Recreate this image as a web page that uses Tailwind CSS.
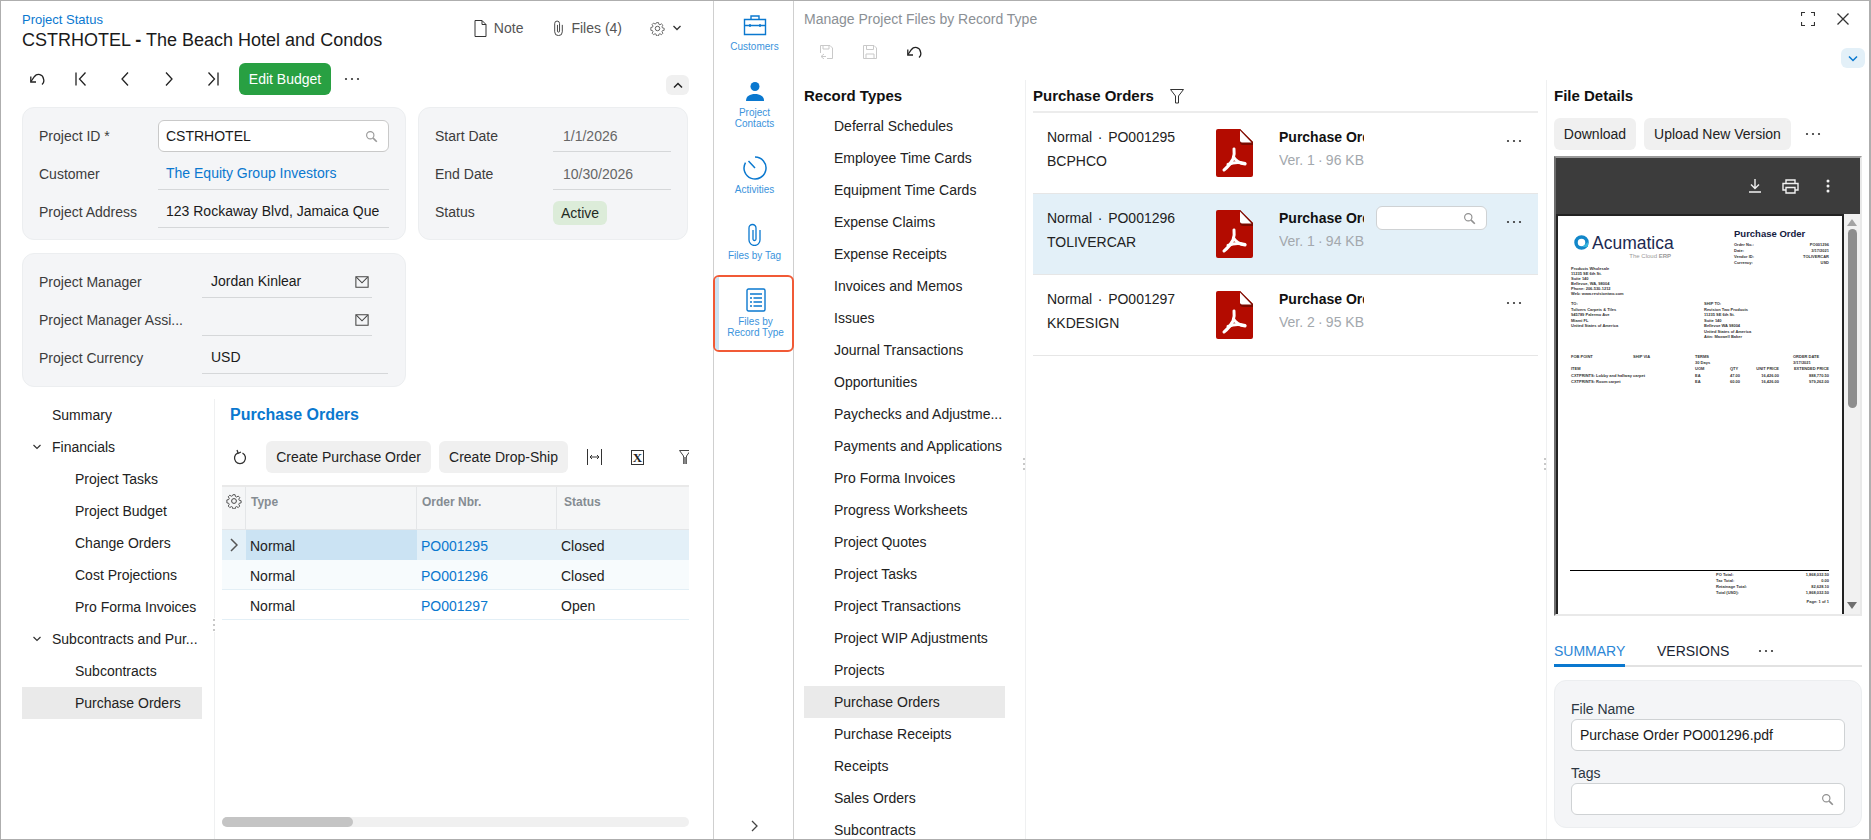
<!DOCTYPE html>
<html lang="en">
<head>
<meta charset="UTF-8">
<title>Project Status</title>
<script src="https://cdn.jsdelivr.net/npm/@tailwindcss/browser@4"></script>
</head>
<body class="bg-white overflow-hidden">
<svg class="hidden">
  <symbol id="pdf" viewBox="0 0 37 48">
    <path d="M2 0H24L37 13V46a2 2 0 0 1-2 2H2a2 2 0 0 1-2-2V2a2 2 0 0 1 2-2z" fill="#b30b00"/>
    <path d="M24 0L37 13V16H27a3 3 0 0 1-3-3z" fill="#7a0a00"/>
    <path d="M24 1.500L35.500 13.500H26a2 2 0 0 1-2-2z" fill="#fff"/>
    <g fill="none" stroke="#fff" stroke-width="3" stroke-linecap="round">
      <path d="M8 41C12 38 15 34 17 30C18 27 18.500 23 18 20"/>
      <path d="M17.500 28C19 31 24 34.500 29 35"/>
      <path d="M12 35.500C17 33.500 23 33 29 34.500"/>
    </g>
  </symbol>
  <symbol id="search" viewBox="0 0 16 16">
    <circle cx="6.500" cy="6.500" r="4.500" fill="none" stroke="currentColor" stroke-width="1.400"/>
    <path d="M10 10l4.500 4.500" stroke="currentColor" stroke-width="2" fill="none"/>
  </symbol>
  <symbol id="more" viewBox="0 0 16 4">
    <circle cx="2" cy="2" r="1.100" fill="currentColor"/><circle cx="8" cy="2" r="1.100" fill="currentColor"/><circle cx="14" cy="2" r="1.100" fill="currentColor"/>
  </symbol>
  <symbol id="gear" viewBox="0 0 16 16">
    <circle cx="8" cy="8" r="2.400" fill="none" stroke="currentColor" stroke-width="1"/>
    <path d="M6.800 1h2.400l.4 2 1.300.6 1.800-1.100 1.700 1.700-1.100 1.800.6 1.300 2 .4v2.400l-2 .4-.6 1.300 1.100 1.800-1.700 1.700-1.800-1.100-1.300.6-.4 2H6.800l-.4-2-1.300-.6-1.800 1.100-1.700-1.700 1.100-1.800-.6-1.300-2-.4V6.800l2-.4.6-1.300-1.100-1.800 1.700-1.700 1.800 1.100 1.300-.6z" transform="translate(.8 .8) scale(.9)" fill="none" stroke="currentColor" stroke-width="1"/>
  </symbol>
  <symbol id="undo" viewBox="0 0 16 13">
    <path d="M2 8.500L5.500 3.500A5 5 0 0 1 14.500 6A5 5 0 0 1 13 11.500" fill="none" stroke="currentColor" stroke-width="1.300"/>
    <path d="M1.800 3.500V9H7" fill="none" stroke="currentColor" stroke-width="1.300"/>
  </symbol>
  <symbol id="mail" viewBox="0 0 16 14">
    <path d="M1 1h14v12H1z" fill="none" stroke="currentColor" stroke-width="1.200"/>
    <path d="M1.500 1.500L8 8l6.500-6.500" fill="none" stroke="currentColor" stroke-width="1.200"/>
  </symbol>
  <symbol id="clip" viewBox="0 0 13 23">
    <path d="M12 7V17a5.500 5.500 0 0 1-11 0V5a3.500 3.500 0 0 1 7 0V16a1.500 1.500 0 0 1-3 0V7" fill="none" stroke="currentColor" stroke-width="1.300"/>
  </symbol>
</svg>

<div class="w-[1871px] h-[840px] flex border-t border-l border-b border-r-2 border-[#aeaeae] font-['Liberation_Sans',Arial,sans-serif] text-[14px] text-[#222] overflow-hidden">

  <!-- left panel: project form -->
  <div class="w-[712px] h-full shrink-0 flex flex-col">
    <div class="h-[62px] flex shrink-0 pl-[21px]">
      <div class="pt-[10px]">
        <div class="text-[13px] leading-[17px] text-[#0a78cf]">Project Status</div>
        <div class="text-[18px] leading-[24px] text-[#1a1a1a] whitespace-nowrap">CSTRHOTEL <b class="font-bold">-</b> The Beach Hotel and Condos</div>
      </div>
      <div class="ml-auto mr-[32px] h-[54px] flex items-center text-[#555]">
        <svg class="w-[13px] h-[17px] mr-[7px] text-[#333]" viewBox="0 0 13 17" fill="none" stroke="currentColor"><path d="M1 .5h7l4 4v12H1zM8 .5v4h4"/></svg>
        <span>Note</span>
        <svg class="w-[9px] h-[16px] ml-[31px] mr-[8px] text-[#333]"><use href="#clip"/></svg>
        <span>Files (4)</span>
        <svg class="w-[15px] h-[15px] ml-[28px] text-[#555]"><use href="#gear"/></svg>
        <svg class="w-[8px] h-[6px] ml-[8px] text-[#333]" viewBox="0 0 8 6" fill="none" stroke="currentColor" stroke-width="1.300"><path d="M.5 1L4 4.500 7.500 1"/></svg>
      </div>
    </div>

    <div class="h-[44px] flex shrink-0 items-start pl-[14px] text-[#222]">
      <div class="w-[44px] h-[32px] flex items-center justify-center"><svg class="w-[16px] h-[13px]"><use href="#undo"/></svg></div>
      <div class="w-[44px] h-[32px] flex items-center justify-center"><svg class="w-[12px] h-[16px]" viewBox="0 0 12 16" fill="none" stroke="currentColor" stroke-width="1.300"><path d="M1 1.500v13M10.500 1.500L4.500 8l6 6.500"/></svg></div>
      <div class="w-[44px] h-[32px] flex items-center justify-center"><svg class="w-[8px] h-[16px]" viewBox="0 0 8 16" fill="none" stroke="currentColor" stroke-width="1.300"><path d="M7 1.500L1 8l6 6.500"/></svg></div>
      <div class="w-[44px] h-[32px] flex items-center justify-center"><svg class="w-[8px] h-[16px]" viewBox="0 0 8 16" fill="none" stroke="currentColor" stroke-width="1.300"><path d="M1 1.500L7 8l-6 6.500"/></svg></div>
      <div class="w-[44px] h-[32px] flex items-center justify-center"><svg class="w-[12px] h-[16px]" viewBox="0 0 12 16" fill="none" stroke="currentColor" stroke-width="1.300"><path d="M11 1.500v13M1.500 1.500L7.500 8l-6 6.500"/></svg></div>
      <div class="ml-[4px] w-[92px] h-[32px] bg-[#28a042] rounded-md text-white flex items-center justify-center">Edit Budget</div>
      <svg class="w-[16px] h-[4px] ml-[13px] mt-[14px] text-[#333]"><use href="#more"/></svg>
      <div class="ml-auto mr-[24px] mt-[12px] w-[23px] h-[20px] bg-[#f0f0f0] rounded-md flex items-center justify-center">
        <svg class="w-[10px] h-[7px]" viewBox="0 0 10 7" fill="none" stroke="#222" stroke-width="1.500"><path d="M1 5.500l4-4 4 4"/></svg>
      </div>
    </div>

    <div class="flex shrink-0 gap-[12px] pl-[21px]">
      <div class="w-[384px] h-[133px] bg-[#f4f5f7] border border-[#eceef0] rounded-xl pl-[16px] pt-[12px] flex flex-col gap-[6px]">
        <div class="flex items-center h-[32px]">
          <span class="w-[119px] text-[#3c3c3c]">Project ID *</span>
          <div class="w-[231px] h-[32px] bg-white border border-[#c9c9c9] rounded-md flex items-center pl-[7px] pr-[10px] text-[#1a1a1a]">CSTRHOTEL<svg class="ml-auto w-[13px] h-[13px] text-[#999]"><use href="#search"/></svg></div>
        </div>
        <div class="flex items-center h-[32px]">
          <span class="w-[119px] text-[#3c3c3c]">Customer</span>
          <div class="w-[231px] h-[32px] border-b border-[#d5d7d9] flex items-center pl-[8px] text-[#0a78cf]">The Equity Group Investors</div>
        </div>
        <div class="flex items-center h-[32px]">
          <span class="w-[119px] text-[#3c3c3c]">Project Address</span>
          <div class="w-[231px] h-[32px] border-b border-[#d5d7d9] flex items-center pl-[8px] whitespace-nowrap text-[#1a1a1a]">123 Rockaway Blvd, Jamaica Que</div>
        </div>
      </div>
      <div class="w-[270px] h-[133px] bg-[#f4f5f7] border border-[#eceef0] rounded-xl pl-[16px] pt-[12px] flex flex-col gap-[6px]">
        <div class="flex items-center h-[32px]">
          <span class="w-[118px] text-[#3c3c3c]">Start Date</span>
          <div class="w-[118px] h-[32px] border-b border-[#d5d7d9] flex items-center pl-[10px] pt-[2px] text-[#666]">1/1/2026</div>
        </div>
        <div class="flex items-center h-[32px]">
          <span class="w-[118px] text-[#3c3c3c]">End Date</span>
          <div class="w-[118px] h-[32px] border-b border-[#d5d7d9] flex items-center pl-[10px] pt-[2px] text-[#666]">10/30/2026</div>
        </div>
        <div class="flex items-center h-[32px]">
          <span class="w-[118px] text-[#3c3c3c]">Status</span>
          <div class="w-[54px] h-[24px] mt-[2px] bg-[#dcecd9] rounded-md flex items-center justify-center text-[#1f2a1f]">Active</div>
        </div>
      </div>
    </div>

    <div class="ml-[21px] mt-[13px] w-[384px] h-[134px] shrink-0 bg-[#f4f5f7] border border-[#eceef0] rounded-xl pl-[16px] pt-[12px] flex flex-col gap-[6px]">
      <div class="flex items-center h-[32px]">
        <span class="w-[163px] text-[#3c3c3c]">Project Manager</span>
        <div class="w-[170px] h-[32px] border-b border-[#d5d7d9] flex items-center pl-[9px] pr-[3px] text-[#1a1a1a]">Jordan Kinlear<svg class="ml-auto w-[14px] h-[14px] text-[#444]"><use href="#mail"/></svg></div>
      </div>
      <div class="flex items-center h-[32px]">
        <span class="w-[163px] text-[#3c3c3c]">Project Manager Assi...</span>
        <div class="w-[170px] h-[32px] border-b border-[#d5d7d9] flex items-center pl-[9px] pr-[3px]"><svg class="ml-auto w-[14px] h-[14px] text-[#444]"><use href="#mail"/></svg></div>
      </div>
      <div class="flex items-center h-[32px]">
        <span class="w-[163px] text-[#3c3c3c]">Project Currency</span>
        <div class="w-[186px] h-[32px] border-b border-[#d5d7d9] flex items-center pl-[9px] text-[#1a1a1a]">USD</div>
      </div>
    </div>

    <div class="flex-1 min-h-0 flex pt-[12px]">
      <div class="relative w-[214px] shrink-0 border-r border-[#eff0f1] pl-[21px]">
        <div class="h-[32px] w-[180px] flex items-center pl-[30px]">Summary</div>
        <div class="h-[32px] w-[180px] flex items-center pl-[11px]"><svg class="w-[8px] h-[6px] mr-[11px]" viewBox="0 0 8 6" fill="none" stroke="#333" stroke-width="1.200"><path d="M.5 1L4 4.500 7.500 1"/></svg>Financials</div>
        <div class="h-[32px] w-[180px] flex items-center pl-[53px]">Project Tasks</div>
        <div class="h-[32px] w-[180px] flex items-center pl-[53px]">Project Budget</div>
        <div class="h-[32px] w-[180px] flex items-center pl-[53px]">Change Orders</div>
        <div class="h-[32px] w-[180px] flex items-center pl-[53px]">Cost Projections</div>
        <div class="h-[32px] w-[180px] flex items-center pl-[53px]">Pro Forma Invoices</div>
        <div class="h-[32px] w-[180px] flex items-center pl-[11px] whitespace-nowrap"><svg class="w-[8px] h-[6px] mr-[11px] shrink-0" viewBox="0 0 8 6" fill="none" stroke="#333" stroke-width="1.200"><path d="M.5 1L4 4.500 7.500 1"/></svg>Subcontracts and Pur...</div>
        <div class="h-[32px] w-[180px] flex items-center pl-[53px]">Subcontracts</div>
        <div class="h-[32px] w-[180px] flex items-center pl-[53px] bg-[#eaeaea]">Purchase Orders</div>
        <div class="absolute right-[-2px] top-[219px] w-[3px] h-[14px] bg-white flex flex-col justify-between py-[1px]">
          <i class="block w-[2px] h-[2px] bg-[#c8c8c8]"></i><i class="block w-[2px] h-[2px] bg-[#c8c8c8]"></i><i class="block w-[2px] h-[2px] bg-[#c8c8c8]"></i>
        </div>
      </div>
      <div class="flex-1 min-w-0 pl-[7px] pr-[24px] pb-[12px] flex flex-col">
        <div class="h-[30px] pl-[8px] pt-[2px] flex items-center text-[16px] font-bold text-[#0a78cf]">Purchase Orders</div>
        <div class="mt-[12px] h-[32px] flex items-center overflow-hidden whitespace-nowrap">
          <svg class="w-[16px] h-[16px] ml-[10px] shrink-0 text-[#333]" viewBox="0 0 16 16" fill="none" stroke="currentColor" stroke-width="1.300"><path d="M10.500 4.200A5.500 5.500 0 1 1 5.500 4.200M5 1l1.200 3.300L9 3"/></svg>
          <div class="ml-[18px] w-[165px] h-[32px] shrink-0 bg-[#f0f0f0] rounded-md flex items-center justify-center">Create Purchase Order</div>
          <div class="ml-[8px] w-[129px] h-[32px] shrink-0 bg-[#f0f0f0] rounded-md flex items-center justify-center">Create Drop-Ship</div>
          <svg class="w-[15px] h-[16px] ml-[19px] shrink-0 text-[#333]" viewBox="0 0 15 16" fill="none" stroke="currentColor"><path d="M.5 0v16M14.500 0v16M3 8h9M5 6L3 8l2 2M10 6l2 2-2 2"/></svg>
          <div class="w-[13px] h-[15px] ml-[29px] shrink-0 border border-[#333] flex items-center justify-center font-['Liberation_Serif',serif] font-bold text-[13px] leading-none text-[#222]">X</div>
          <svg class="w-[12px] h-[14px] ml-[35px] shrink-0" viewBox="0 0 12 14"><path d="M.5.500h11L7.500 6v8h-3V6z" fill="#fff" stroke="#444"/><path d="M4.500 7h3v7h-3z" fill="#888"/></svg>
        </div>
        <div class="mt-[12px] border-t-2 border-[#e9e9e9]">
          <div class="h-[43px] flex bg-[#f5f6f7] border-b border-[#e4e6e8] text-[12px] font-bold text-[#858c92]">
            <div class="w-[24px] border-r border-[#e4e6e8] flex justify-center pt-[6px]"><svg class="w-[16px] h-[16px] text-[#444]"><use href="#gear"/></svg></div>
            <div class="w-[171px] border-r border-[#e4e6e8] pl-[5px] pt-[6px]">Type</div>
            <div class="w-[140px] border-r border-[#e4e6e8] pl-[5px] pt-[6px]">Order Nbr.</div>
            <div class="pl-[7px] pt-[6px]">Status</div>
          </div>
          <div class="h-[30px] flex items-center bg-[#e3f0f8]">
            <div class="w-[24px] flex justify-center"><svg class="w-[8px] h-[14px]" viewBox="0 0 8 14" fill="none" stroke="#555" stroke-width="1.500"><path d="M1 1l6 6-6 6"/></svg></div>
            <div class="w-[171px] h-full bg-[#cbe3f3] pl-[4px] pt-[2px] flex items-center">Normal</div>
            <div class="w-[140px] pl-[4px] pt-[3px] text-[#0a78cf]">PO001295</div>
            <div class="pl-[4px] pt-[3px]">Closed</div>
          </div>
          <div class="h-[30px] flex items-center bg-[#f7fbfd] border-b border-[#e3eff6]">
            <div class="w-[24px]"></div>
            <div class="w-[171px] pl-[4px] pt-[3px]">Normal</div>
            <div class="w-[140px] pl-[4px] pt-[3px] text-[#0a78cf]">PO001296</div>
            <div class="pl-[4px] pt-[3px]">Closed</div>
          </div>
          <div class="h-[30px] flex items-center border-b border-[#e3eff6]">
            <div class="w-[24px]"></div>
            <div class="w-[171px] pl-[4px] pt-[3px]">Normal</div>
            <div class="w-[140px] pl-[4px] pt-[3px] text-[#0a78cf]">PO001297</div>
            <div class="pl-[4px] pt-[3px]">Open</div>
          </div>
        </div>
        <div class="mt-auto h-[10px] bg-[#f0f0f0] rounded-full">
          <div class="w-[131px] h-full bg-[#c4c4c4] rounded-full"></div>
        </div>
      </div>
    </div>
  </div>

  <!-- icon rail -->
  <div class="w-[81px] h-full shrink-0 border-l border-r border-[#cfcfcf] pl-[2px] flex flex-col text-[10px] leading-[11px] text-[#3a93dc] text-center">
    <div class="h-[66px] pt-[12px] flex flex-col items-center">
      <svg class="w-[24px] h-[24px] text-[#0a78cf]" viewBox="0 0 24 24" fill="none" stroke="currentColor" stroke-width="1.400"><path d="M1.500 6.500h21v15h-21zM1.500 12.500h21M8 6.500V3h8v3.500M7 11v3M17 11v3"/></svg>
      <div class="mt-[4px]">Customers</div>
    </div>
    <div class="h-[76px] pt-[13px] flex flex-col items-center">
      <svg class="w-[24px] h-[24px] text-[#0a78cf]" viewBox="0 0 24 24" fill="currentColor"><circle cx="12" cy="6.500" r="4.500"/><path d="M3 21c0-5 4-7 9-7s9 2 9 7z"/></svg>
      <div class="mt-[3px]">Project<br>Contacts</div>
    </div>
    <div class="h-[66px] pt-[13px] flex flex-col items-center">
      <svg class="w-[24px] h-[24px] text-[#0a78cf]" viewBox="0 0 24 24" fill="none" stroke="currentColor" stroke-width="1.500"><path d="M12 1a11 11 0 1 1-9.500 5.500M5.500 5L12 12"/></svg>
      <div class="mt-[4px]">Activities</div>
    </div>
    <div class="h-[66px] pt-[14px] flex flex-col items-center">
      <svg class="w-[13px] h-[23px] text-[#0a78cf]"><use href="#clip"/></svg>
      <div class="mt-[4px]">Files by Tag</div>
    </div>
    <div class="relative -ml-[3px] w-[81px] h-[77px] shrink-0 bg-white border-2 border-[#f15a36] rounded-md overflow-hidden pl-[4px] pt-[11px] flex flex-col items-center">
      <div class="absolute left-0 top-0 w-[4px] h-full bg-[#cbe3f3]"></div>
      <svg class="w-[20px] h-[24px] text-[#0a78cf]" viewBox="0 0 20 24" fill="none" stroke="currentColor" stroke-width="1.400"><rect x="1" y="1" width="18" height="22" rx="1.500"/><path d="M4 6h12M7.500 10h8.500M7.500 14h8.500M7.500 18h8.500M4 10h2M4 14h2M4 18h2"/></svg>
      <div class="mt-[4px]">Files by<br>Record Type</div>
    </div>
    <div class="mt-auto mb-[7px] flex justify-center">
      <svg class="w-[7px] h-[12px]" viewBox="0 0 7 12" fill="none" stroke="#444" stroke-width="1.300"><path d="M1 1l5 5-5 5"/></svg>
    </div>
  </div>

  <!-- manage files dialog -->
  <div class="flex-1 min-w-0 h-full flex flex-col">
    <div class="h-[36px] shrink-0 flex items-center pl-[10px] pr-[20px] text-[#8b9095]">
      <span>Manage Project Files by Record Type</span>
      <svg class="ml-auto w-[14px] h-[14px] text-[#333]" viewBox="0 0 14 14" fill="none" stroke="currentColor" stroke-width="1.200"><path d="M.5 4V.500H4M10 .500h3.500V4M13.500 10v3.500H10M4 13.500H.500V10"/></svg>
      <svg class="ml-[22px] w-[12px] h-[12px] text-[#333]" viewBox="0 0 12 12" fill="none" stroke="currentColor" stroke-width="1.300"><path d="M.5.500l11 11M11.500.500l-11 11"/></svg>
    </div>
    <div class="h-[43px] shrink-0 flex items-start pl-[10px] pr-[4px]">
      <div class="w-[44px] h-[30px] flex items-center justify-center"><svg class="w-[14px] h-[14px] text-[#c9c9c9]" viewBox="0 0 14 14" fill="none" stroke="currentColor"><path d="M1.500 8V.500H11L13.500 3v10.500H8M4 .500v3.500h6V.500M5 9L2 11.500 5 14M2 11.500h5"/></svg></div>
      <div class="w-[44px] h-[30px] flex items-center justify-center"><svg class="w-[14px] h-[14px] text-[#c9c9c9]" viewBox="0 0 14 14" fill="none" stroke="currentColor"><path d="M.5.500H11L13.500 3v10.500H.500zM3.500.500v4h7v-4M3 13.500V9h8v4.500"/></svg></div>
      <div class="w-[44px] h-[30px] flex items-center justify-center"><svg class="w-[16px] h-[13px] text-[#222]"><use href="#undo"/></svg></div>
      <div class="ml-auto mt-[11px] w-[24px] h-[20px] bg-[#e3f0f8] rounded-md flex items-center justify-center">
        <svg class="w-[10px] h-[7px]" viewBox="0 0 10 7" fill="none" stroke="#0a78cf" stroke-width="1.500"><path d="M1 1.500l4 4 4-4"/></svg>
      </div>
    </div>

    <div class="flex-1 min-h-0 flex">
      <!-- record types -->
      <div class="relative w-[232px] shrink-0 border-r border-[#eff0f1] pl-[10px] overflow-hidden">
        <div class="h-[30px] pt-[2px] flex items-center text-[15px] font-bold text-[#111]">Record Types</div>
        <div class="w-[201px] h-[32px] pl-[30px] flex items-center">Deferral Schedules</div>
        <div class="w-[201px] h-[32px] pl-[30px] flex items-center">Employee Time Cards</div>
        <div class="w-[201px] h-[32px] pl-[30px] flex items-center">Equipment Time Cards</div>
        <div class="w-[201px] h-[32px] pl-[30px] flex items-center">Expense Claims</div>
        <div class="w-[201px] h-[32px] pl-[30px] flex items-center">Expense Receipts</div>
        <div class="w-[201px] h-[32px] pl-[30px] flex items-center">Invoices and Memos</div>
        <div class="w-[201px] h-[32px] pl-[30px] flex items-center">Issues</div>
        <div class="w-[201px] h-[32px] pl-[30px] flex items-center">Journal Transactions</div>
        <div class="w-[201px] h-[32px] pl-[30px] flex items-center">Opportunities</div>
        <div class="w-[201px] h-[32px] pl-[30px] flex items-center whitespace-nowrap">Paychecks and Adjustme...</div>
        <div class="w-[201px] h-[32px] pl-[30px] flex items-center">Payments and Applications</div>
        <div class="w-[201px] h-[32px] pl-[30px] flex items-center">Pro Forma Invoices</div>
        <div class="w-[201px] h-[32px] pl-[30px] flex items-center">Progress Worksheets</div>
        <div class="w-[201px] h-[32px] pl-[30px] flex items-center">Project Quotes</div>
        <div class="w-[201px] h-[32px] pl-[30px] flex items-center">Project Tasks</div>
        <div class="w-[201px] h-[32px] pl-[30px] flex items-center">Project Transactions</div>
        <div class="w-[201px] h-[32px] pl-[30px] flex items-center">Project WIP Adjustments</div>
        <div class="w-[201px] h-[32px] pl-[30px] flex items-center">Projects</div>
        <div class="w-[201px] h-[32px] pl-[30px] flex items-center bg-[#eaeaea]">Purchase Orders</div>
        <div class="w-[201px] h-[32px] pl-[30px] flex items-center">Purchase Receipts</div>
        <div class="w-[201px] h-[32px] pl-[30px] flex items-center">Receipts</div>
        <div class="w-[201px] h-[32px] pl-[30px] flex items-center">Sales Orders</div>
        <div class="w-[201px] h-[32px] pl-[30px] flex items-center">Subcontracts</div>
        <div class="absolute right-0 top-[378px] w-[2px] h-[12px] bg-white flex flex-col justify-between">
          <i class="block w-[2px] h-[2px] bg-[#c8c8c8]"></i><i class="block w-[2px] h-[2px] bg-[#c8c8c8]"></i><i class="block w-[2px] h-[2px] bg-[#c8c8c8]"></i>
        </div>
      </div>

      <!-- purchase order files -->
      <div class="relative w-[521px] shrink-0 border-r border-[#eff0f1] pl-[7px] pr-[8px]">
        <div class="h-[33px] pt-[2px] border-b-2 border-[#ececec] flex items-center text-[15px] font-bold text-[#111]">
          Purchase Orders
          <svg class="ml-[16px] w-[14px] h-[15px] text-[#333]" viewBox="0 0 14 15" fill="none" stroke="currentColor"><path d="M.5.500h13L8.500 7v7h-3V7z"/></svg>
        </div>
        <div class="h-[81px] flex border-b border-[#e6e6e6]">
          <div class="w-[183px] pl-[14px] pt-[14px] leading-[20px] shrink-0">
            <div class="flex whitespace-nowrap">Normal<span class="w-[16px] text-center">·</span>PO001295</div>
            <div class="mt-[4px]">BCPHCO</div>
          </div>
          <svg class="w-[37px] h-[48px] mt-[16px] shrink-0"><use href="#pdf"/></svg>
          <div class="ml-[26px] w-[85px] pt-[14px] leading-[20px] shrink-0 overflow-hidden whitespace-nowrap">
            <div class="font-bold text-[#111]">Purchase Order PO001295.pdf</div>
            <div class="mt-[3px] text-[#a3a8ad] flex">Ver. 1<span class="w-[17px] text-center">·</span>96 KB</div>
          </div>
          <svg class="ml-auto mr-[16px] mt-[26px] w-[16px] h-[4px] text-[#333]"><use href="#more"/></svg>
        </div>
        <div class="h-[81px] flex border-b border-[#e6e6e6] bg-[#e3f0f8]">
          <div class="w-[183px] pl-[14px] pt-[14px] leading-[20px] shrink-0">
            <div class="flex whitespace-nowrap">Normal<span class="w-[16px] text-center">·</span>PO001296</div>
            <div class="mt-[4px]">TOLIVERCAR</div>
          </div>
          <svg class="w-[37px] h-[48px] mt-[16px] shrink-0"><use href="#pdf"/></svg>
          <div class="ml-[26px] w-[85px] pt-[14px] leading-[20px] shrink-0 overflow-hidden whitespace-nowrap">
            <div class="font-bold text-[#111]">Purchase Order PO001296.pdf</div>
            <div class="mt-[3px] text-[#a3a8ad] flex">Ver. 1<span class="w-[17px] text-center">·</span>94 KB</div>
          </div>
          <div class="ml-[12px] mt-[12px] w-[111px] h-[24px] bg-white border border-[#cfd2d4] rounded-md flex items-center justify-end pr-[10px] shrink-0"><svg class="w-[13px] h-[13px] text-[#8f8f8f]"><use href="#search"/></svg></div>
          <svg class="ml-auto mr-[16px] mt-[26px] w-[16px] h-[4px] text-[#333]"><use href="#more"/></svg>
        </div>
        <div class="h-[81px] flex border-b border-[#e6e6e6]">
          <div class="w-[183px] pl-[14px] pt-[14px] leading-[20px] shrink-0">
            <div class="flex whitespace-nowrap">Normal<span class="w-[16px] text-center">·</span>PO001297</div>
            <div class="mt-[4px]">KKDESIGN</div>
          </div>
          <svg class="w-[37px] h-[48px] mt-[16px] shrink-0"><use href="#pdf"/></svg>
          <div class="ml-[26px] w-[85px] pt-[14px] leading-[20px] shrink-0 overflow-hidden whitespace-nowrap">
            <div class="font-bold text-[#111]">Purchase Order PO001297.pdf</div>
            <div class="mt-[3px] text-[#a3a8ad] flex">Ver. 2<span class="w-[17px] text-center">·</span>95 KB</div>
          </div>
          <svg class="ml-auto mr-[16px] mt-[26px] w-[16px] h-[4px] text-[#333]"><use href="#more"/></svg>
        </div>
        <div class="absolute right-0 top-[378px] w-[2px] h-[12px] bg-white flex flex-col justify-between">
          <i class="block w-[2px] h-[2px] bg-[#c8c8c8]"></i><i class="block w-[2px] h-[2px] bg-[#c8c8c8]"></i><i class="block w-[2px] h-[2px] bg-[#c8c8c8]"></i>
        </div>
      </div>

      <!-- file details -->
      <div class="flex-1 min-w-0 pl-[7px] pr-[7px]">
        <div class="h-[32px] flex items-center text-[15px] font-bold text-[#111]">File Details</div>
        <div class="mt-[6px] h-[32px] flex items-center">
          <div class="w-[82px] h-[32px] bg-[#f0f0f0] rounded-md flex items-center justify-center">Download</div>
          <div class="ml-[8px] w-[147px] h-[32px] bg-[#f0f0f0] rounded-md flex items-center justify-center">Upload New Version</div>
          <svg class="ml-[14px] w-[16px] h-[4px] text-[#333]"><use href="#more"/></svg>
        </div>
        <!-- embedded pdf viewer -->
        <div class="mt-[6px] h-[460px] border-2 border-t-[#9a9a9a] border-l-[#6e6e6e] border-r-[#e9e9e9] border-b-[#e9e9e9] flex flex-col">
          <div class="h-[56px] shrink-0 bg-[#3c3c3c] flex items-center justify-end pr-[30px] text-[#f1f1f1]">
            <svg class="w-[14px] h-[14px]" viewBox="0 0 14 14" fill="none" stroke="currentColor" stroke-width="1.400"><path d="M7 0v9M3 5.500L7 9.500l4-4M1 13h12"/></svg>
            <svg class="ml-[20px] w-[17px] h-[15px]" viewBox="0 0 17 15" fill="none" stroke="currentColor" stroke-width="1.400"><path d="M4 4V1h9v3M4 11H1V4.500h15V11h-3M4 8.500h9V14H4z"/></svg>
            <svg class="ml-[27px] w-[4px] h-[14px]" viewBox="0 0 4 14" fill="currentColor"><circle cx="2" cy="2" r="1.500"/><circle cx="2" cy="7" r="1.500"/><circle cx="2" cy="12" r="1.500"/></svg>
          </div>
          <div class="flex-1 min-h-0 flex bg-[#222] pl-[2px] pt-[2px]">
            <div class="w-[284px] h-full shrink-0 bg-white flex flex-col text-[4px] leading-[5px] text-[#333] font-semibold whitespace-nowrap overflow-hidden">
              <div class="flex h-[50px] shrink-0">
                <div class="w-[176px] pl-[16px] pt-[19px] shrink-0">
                  <div class="flex items-center h-[16px] w-[97px]">
                    <svg class="w-[15px] h-[16px] shrink-0" viewBox="0 0 15 16"><circle cx="7.500" cy="7.500" r="5.500" fill="none" stroke="#1287c9" stroke-width="3.500"/><path d="M8 12h6v-5z" fill="#35b4de"/></svg>
                    <span class="ml-[3px] text-[17.500px] leading-[16px] font-normal text-[#1d2a52]">Acumatica</span>
                  </div>
                  <div class="w-[97px] mt-[1px] text-right text-[6px] leading-[8px] font-normal text-[#9a9a9a]">The Cloud <b class="font-bold">ERP</b></div>
                </div>
                <div class="w-[95px] pt-[12px] shrink-0">
                  <div class="text-[9.500px] leading-[12px] font-bold text-[#15203f]">Purchase Order</div>
                  <div class="mt-[2px] flex justify-between leading-[6px]"><b>Order No.:</b><span>PO001296</span></div>
                  <div class="flex justify-between leading-[6px]"><b>Date:</b><span>3/17/2021</span></div>
                  <div class="flex justify-between leading-[6px]"><b>Vendor ID:</b><span>TOLIVERCAR</span></div>
                  <div class="flex justify-between leading-[6px]"><b>Currency:</b><span>USD</span></div>
                </div>
              </div>
              <div class="pl-[13px]">
                <div>Products Wholesale</div>
                <div>11235 SE 6th St.</div>
                <div>Suite 140</div>
                <div>Bellevue, WA, 98004</div>
                <div>Phone: 206-530-1212</div>
                <div>Web: www.revisiontwo.com</div>
              </div>
              <div class="mt-[5px] pl-[13px] flex">
                <div class="w-[133px] shrink-0">
                  <b class="block leading-[6px]">TO:</b>
                  <div>Tolivers Carpets &amp; Tiles</div>
                  <div>945789 Palermo Ave</div>
                  <div class="mt-[1px]">Miami FL</div>
                  <div>United States of America</div>
                </div>
                <div>
                  <b class="block leading-[6px]">SHIP TO:</b>
                  <div>Revision Two Products</div>
                  <div>11235 SE 6th St.</div>
                  <div class="mt-[1px]">Suite 140</div>
                  <div>Bellevue WA 98004</div>
                  <div class="mt-[1px]">United States of America</div>
                  <div>Attn: Maxwell Baker</div>
                </div>
              </div>
              <div class="mt-[15px] pl-[13px] leading-[6px]">
                <div class="grid grid-cols-[62px_62px_98px_36px] font-bold"><span>FOB POINT</span><span>SHIP VIA</span><span>TERMS</span><span>ORDER DATE</span></div>
                <div class="grid grid-cols-[62px_62px_98px_36px]"><span></span><span></span><span>30 Days</span><span>3/17/2021</span></div>
                <div class="grid grid-cols-[124px_35px_14px_35px_50px] font-bold"><span>ITEM</span><span>UOM</span><span>QTY</span><span class="text-right">UNIT PRICE</span><span class="text-right">EXTENDED PRICE</span></div>
                <div class="grid grid-cols-[124px_35px_14px_35px_50px] mt-[1px]"><span>CXTPRINTS: Lobby and hallway carpet</span><span>EA</span><span>47.00</span><span class="text-right">16,426.00</span><span class="text-right">888,770.50</span></div>
                <div class="grid grid-cols-[124px_35px_14px_35px_50px]"><span>CXTPRINTS: Room carpet</span><span>EA</span><span>60.00</span><span class="text-right">16,426.00</span><span class="text-right">979,262.00</span></div>
              </div>
              <div class="mt-auto ml-[12px] w-[259px] border-t border-black pt-[1px] pb-[9px] leading-[6px]">
                <div class="ml-[146px]">
                  <div class="flex justify-between"><b>PO Total:</b><span>1,868,032.50</span></div>
                  <div class="flex justify-between"><b>Tax Total:</b><span>0.00</span></div>
                  <div class="flex justify-between"><b>Retainage Total:</b><span>82,628.10</span></div>
                  <div class="flex justify-between"><b>Total (USD):</b><span>1,868,032.50</span></div>
                  <div class="mt-[3px] text-right">Page: 1 of 1</div>
                </div>
              </div>
            </div>
            <div class="ml-[2px] flex-1 -mt-[2px] bg-[#f1f1f1] flex flex-col items-center pt-[5px] pb-[5px]">
              <svg class="w-[10px] h-[7px]" viewBox="0 0 10 7"><path d="M5 0l5 7H0z" fill="#a3a3a3"/></svg>
              <div class="mt-[3px] w-[9px] h-[179px] bg-[#8e8e8e] rounded-full"></div>
              <svg class="mt-auto w-[10px] h-[7px]" viewBox="0 0 10 7"><path d="M5 7L0 0h10z" fill="#6f6f6f"/></svg>
            </div>
          </div>
        </div>

        <div class="mt-[14px] h-[37px] border-b-2 border-[#e2e2e2] flex items-start">
          <div class="h-[37px] w-[71px] border-b-[3px] border-[#0a78cf] text-[#2b86d6] leading-[42px] whitespace-nowrap -mb-[2px]">SUMMARY</div>
          <div class="ml-[32px] leading-[42px] text-[#1a2433]">VERSIONS</div>
          <svg class="ml-[29px] mt-[19px] w-[16px] h-[4px] text-[#333]"><use href="#more"/></svg>
        </div>
        <div class="mt-[13px] h-[148px] bg-[#f4f5f7] border border-[#eceef0] rounded-xl px-[16px] pt-[19px]">
          <div class="leading-[18px] text-[#2c3742]">File Name</div>
          <div class="mt-[1px] h-[32px] bg-white border border-[#cfd2d4] rounded-md flex items-center pl-[8px] text-[#1a1a1a]">Purchase Order PO001296.pdf</div>
          <div class="mt-[13px] leading-[18px] text-[#2c3742]">Tags</div>
          <div class="mt-[1px] h-[32px] bg-white border border-[#cfd2d4] rounded-md flex items-center justify-end pr-[10px]"><svg class="w-[13px] h-[13px] text-[#8f8f8f]"><use href="#search"/></svg></div>
        </div>
      </div>
    </div>
  </div>
</div>
</body>
</html>
